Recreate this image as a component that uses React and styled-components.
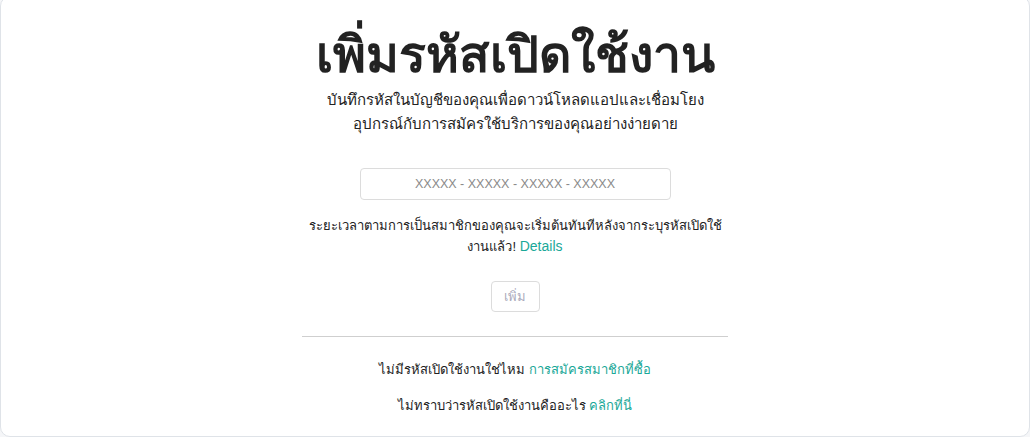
import React from "react";
import styled, { createGlobalStyle } from "styled-components";

const GlobalStyle = createGlobalStyle`
  html, body {
    margin: 0;
    padding: 0;
    background: #f5f6f8;
  }
  body {
    font-family: "Liberation Sans", Arial, sans-serif;
    color: #222;
  }
`;

const Card = styled.div`
  box-sizing: border-box;
  margin-top: -4px;
  height: 441px;
  background: #fff;
  border: 1px solid #dfe3e8;
  border-radius: 10px;
  display: flex;
  justify-content: center;
  overflow: hidden;
`;

const Column = styled.div`
  width: 426px;
  display: flex;
  flex-direction: column;
  align-items: center;
  text-align: center;
  padding-top: 30px;
`;

const Title = styled.h1`
  margin: 0;
  font-size: 50px;
  line-height: 56px;
  font-weight: 700;
  color: #222;
  white-space: nowrap;
`;

const Subtitle = styled.p`
  margin: 5px 0 0;
  font-size: 15px;
  line-height: 24px;
  color: #222;
  white-space: nowrap;
`;

const CodeInput = styled.input`
  box-sizing: border-box;
  margin-top: 32px;
  width: 311px;
  height: 32px;
  border: 1px solid #dcdcdc;
  border-radius: 4px;
  text-align: center;
  font-family: inherit;
  font-size: 12.5px;
  color: #333;
  outline: none;
  &::placeholder {
    color: #8a8a8a;
  }
`;

const Note = styled.p`
  margin: ${(p) => p.$top || "12px"} 0 0;
  font-size: 13px;
  line-height: 21px;
  color: #222;
  white-space: nowrap;
`;

const Link = styled.a`
  color: #1aa898;
  text-decoration: none;
  font-size: ${(p) => p.$size || "inherit"};
`;

const AddButton = styled.button`
  margin-top: 24px;
  width: 49px;
  height: 31px;
  background: #fff;
  border: 1px solid #dcdcdc;
  border-radius: 4px;
  font-family: inherit;
  font-size: 13px;
  color: #aab;
  padding: 0;
`;

const Divider = styled.hr`
  width: 100%;
  margin: 24px 0 0;
  border: 0;
  border-top: 1px solid #cfcfcf;
`;

export default function App() {
  return (
    <>
      <GlobalStyle />
      <Card>
        <Column>
          <Title>เพิ่มรหัสเปิดใช้งาน</Title>
          <Subtitle>
            บันทึกรหัสในบัญชีของคุณเพื่อดาวน์โหลดแอปและเชื่อมโยง
            <br />
            อุปกรณ์กับการสมัครใช้บริการของคุณอย่างง่ายดาย
          </Subtitle>
          <CodeInput placeholder="XXXXX - XXXXX - XXXXX - XXXXX" />
          <Note $top="15px">
            ระยะเวลาตามการเป็นสมาชิกของคุณจะเริ่มต้นทันทีหลังจากระบุรหัสเปิดใช้
            <br />
            งานแล้ว! <Link href="#" $size="14px">Details</Link>
          </Note>
          <AddButton disabled>เพิ่ม</AddButton>
          <Divider />
          <Note $top="22px">
            ไม่มีรหัสเปิดใช้งานใช่ไหม <Link href="#">การสมัครสมาชิกที่ซื้อ</Link>
          </Note>
          <Note $top="15px">
            ไม่ทราบว่ารหัสเปิดใช้งานคืออะไร <Link href="#">คลิกที่นี่</Link>
          </Note>
        </Column>
      </Card>
    </>
  );
}
